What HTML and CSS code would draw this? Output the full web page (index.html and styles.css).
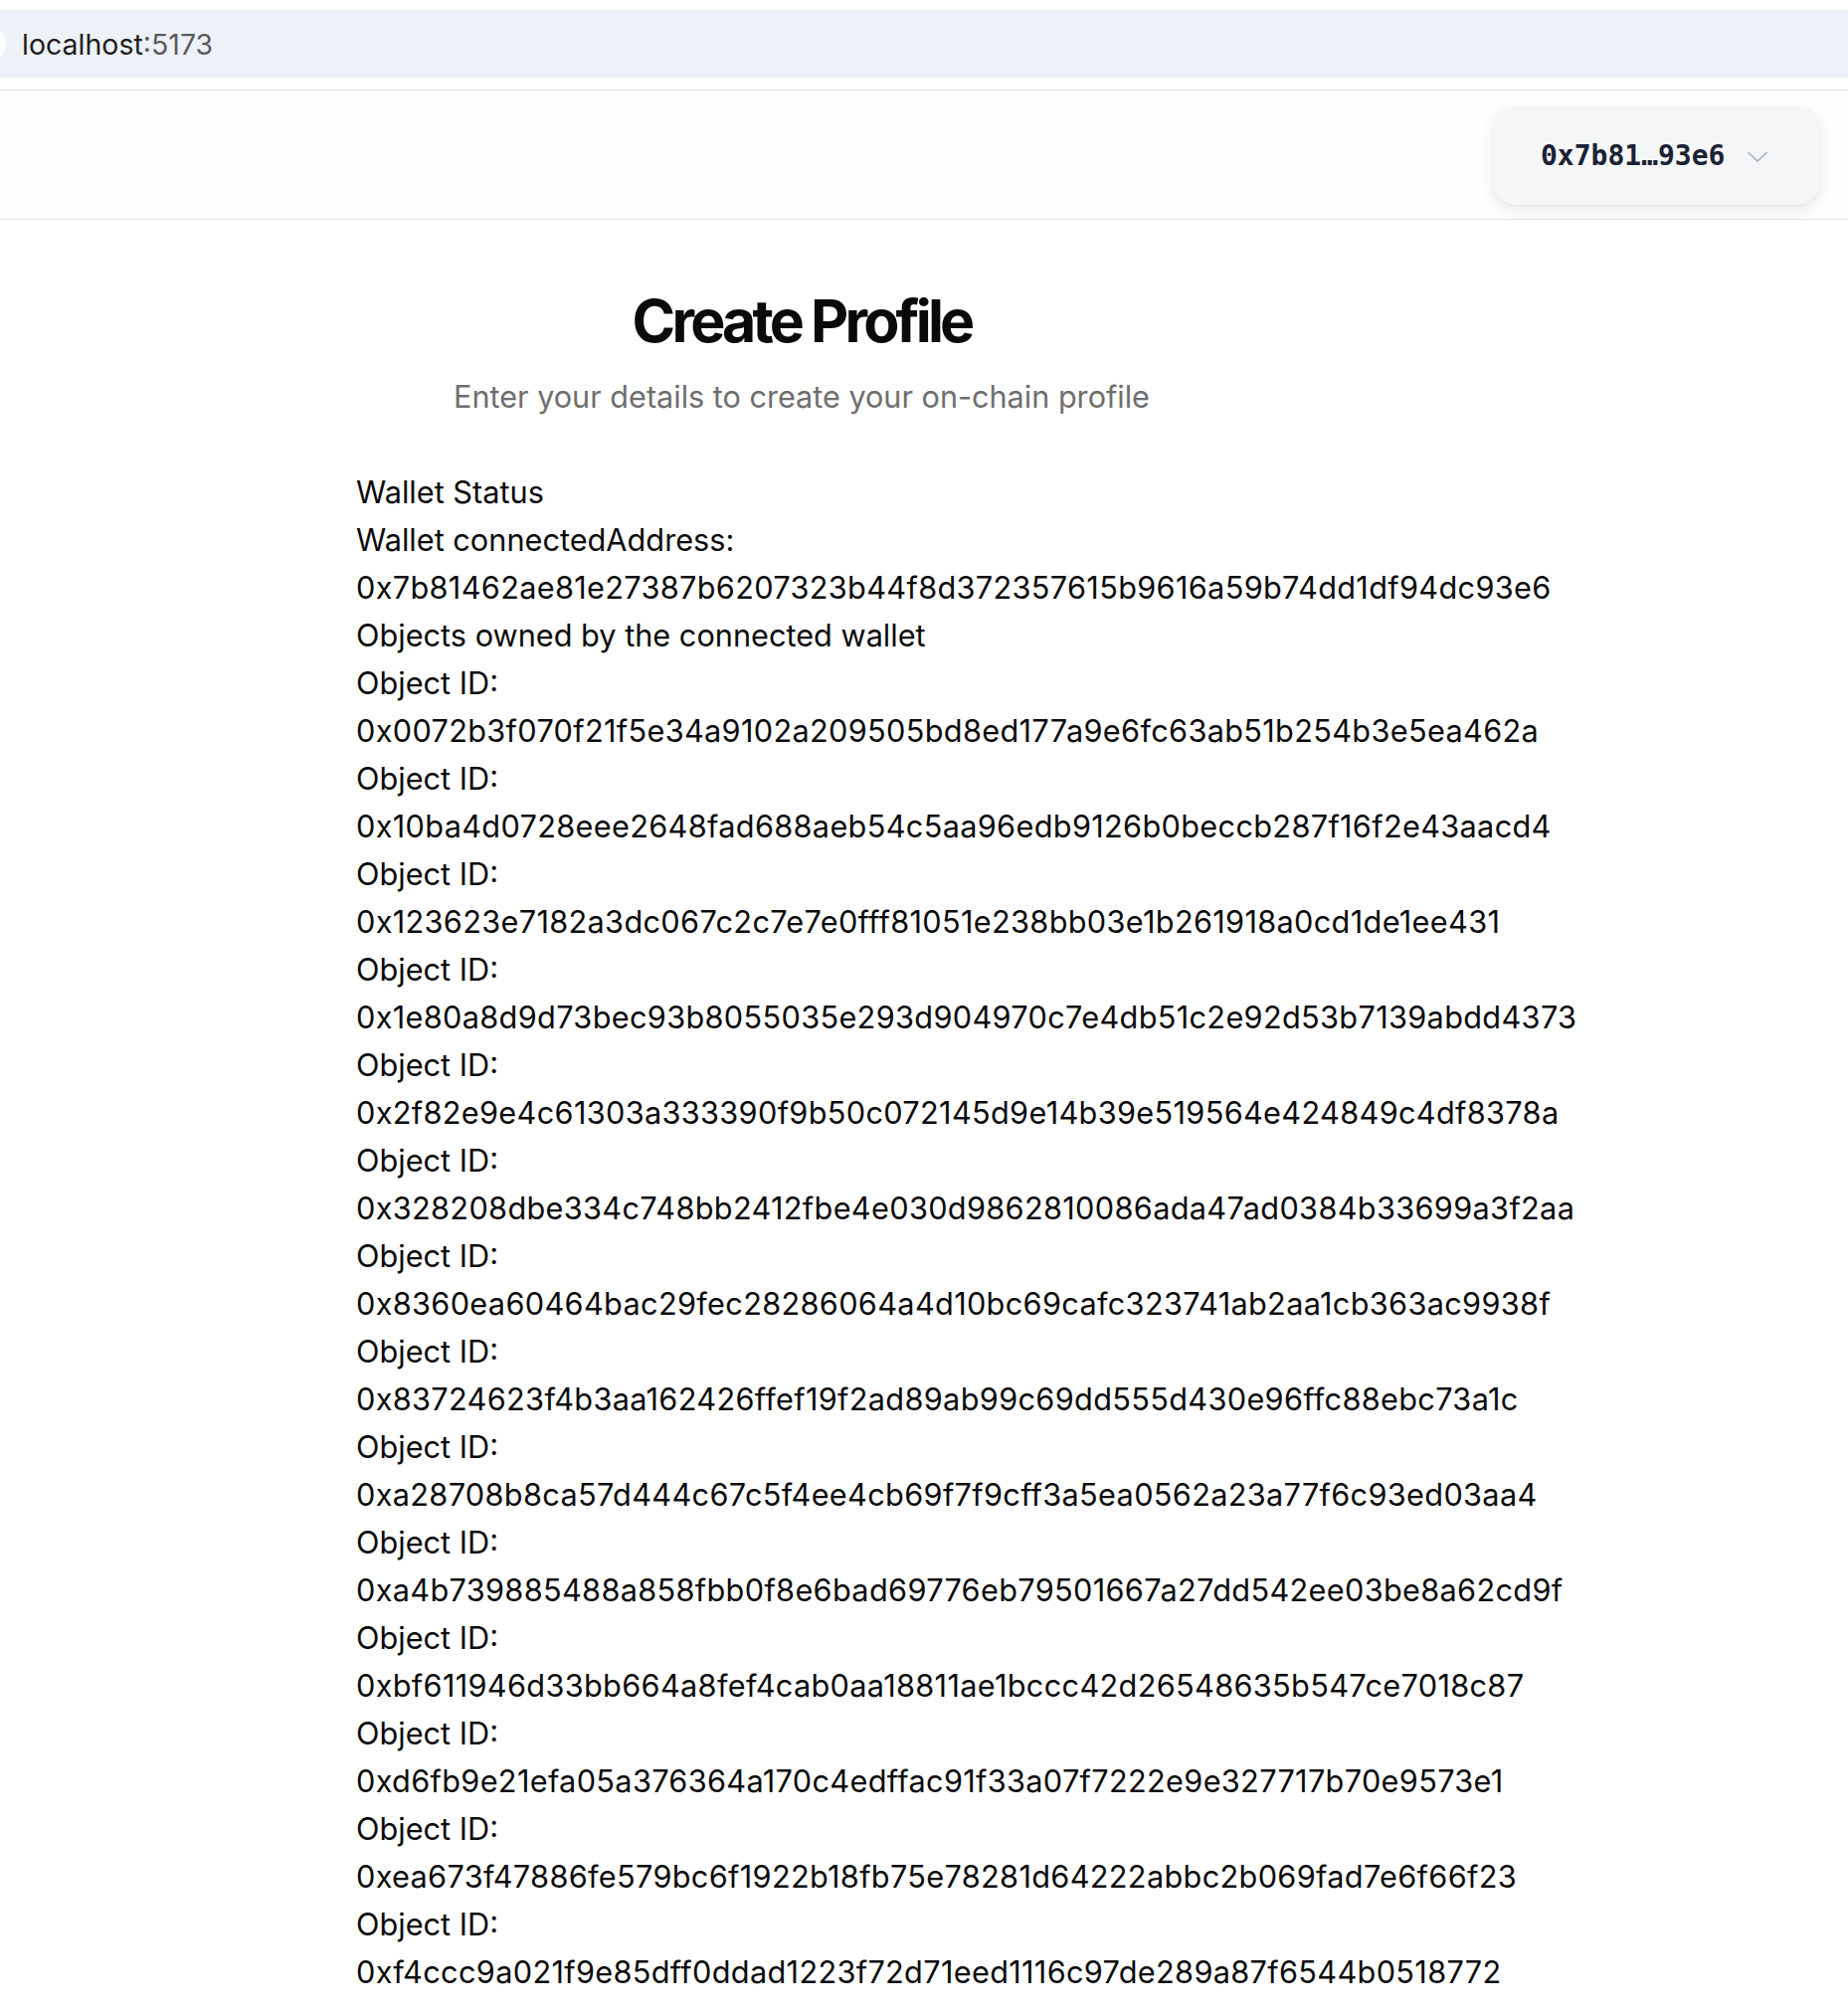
FILE: index.html
```html
<!DOCTYPE html>
<html lang="en">
<head>
<meta charset="utf-8">
<title>Create Profile</title>
<link rel="stylesheet" href="styles.css">
</head>
<body>
<div class="chrome">
  <div class="url-bar">
    <span class="url-pill"></span>
    <span class="url-host">localhost</span><span class="url-port">:5173</span>
  </div>
</div>
<header class="topbar">
  <button class="wallet-btn" type="button">
    <span class="wallet-addr">0x7b81…93e6</span>
    <svg class="chevron" width="24" height="24" viewBox="0 0 24 24" aria-hidden="true"><path d="M3 8.5 L12 17 L21 8.5" fill="none" stroke="currentColor" stroke-width="1.6" stroke-linecap="round" stroke-linejoin="round"/></svg>
  </button>
</header>
<main class="main">
  <div class="container">
    <h1 class="title">Create Profile</h1>
    <p class="subtitle">Enter your details to create your on-chain profile</p>
    <section class="status">
      <div class="line">Wallet Status</div>
      <div class="line">Wallet connectedAddress: <span class="hex">0x7b81462ae81e27387b6207323b44f8d372357615b9616a59b74dd1df94dc93e6</span></div>
      <div class="line">Objects owned by the connected wallet</div>
      <ul class="objects">
        <li>Object ID: <span class="hex">0x0072b3f070f21f5e34a9102a209505bd8ed177a9e6fc63ab51b254b3e5ea462a</span></li>
        <li>Object ID: <span class="hex">0x10ba4d0728eee2648fad688aeb54c5aa96edb9126b0beccb287f16f2e43aacd4</span></li>
        <li>Object ID: <span class="hex">0x123623e7182a3dc067c2c7e7e0fff81051e238bb03e1b261918a0cd1de1ee431</span></li>
        <li>Object ID: <span class="hex">0x1e80a8d9d73bec93b8055035e293d904970c7e4db51c2e92d53b7139abdd4373</span></li>
        <li>Object ID: <span class="hex">0x2f82e9e4c61303a333390f9b50c072145d9e14b39e519564e424849c4df8378a</span></li>
        <li>Object ID: <span class="hex">0x328208dbe334c748bb2412fbe4e030d9862810086ada47ad0384b33699a3f2aa</span></li>
        <li>Object ID: <span class="hex">0x8360ea60464bac29fec28286064a4d10bc69cafc323741ab2aa1cb363ac9938f</span></li>
        <li>Object ID: <span class="hex">0x83724623f4b3aa162426ffef19f2ad89ab99c69dd555d430e96ffc88ebc73a1c</span></li>
        <li>Object ID: <span class="hex">0xa28708b8ca57d444c67c5f4ee4cb69f7f9cff3a5ea0562a23a77f6c93ed03aa4</span></li>
        <li>Object ID: <span class="hex">0xa4b739885488a858fbb0f8e6bad69776eb79501667a27dd542ee03be8a62cd9f</span></li>
        <li>Object ID: <span class="hex">0xbf611946d33bb664a8fef4cab0aa18811ae1bccc42d26548635b547ce7018c87</span></li>
        <li>Object ID: <span class="hex">0xd6fb9e21efa05a376364a170c4edffac91f33a07f7222e9e327717b70e9573e1</span></li>
        <li>Object ID: <span class="hex">0xea673f47886fe579bc6f1922b18fb75e78281d64222abbc2b069fad7e6f66f23</span></li>
        <li>Object ID: <span class="hex">0xf4ccc9a021f9e85dff0ddad1223f72d71eed1116c97de289a87f6544b0518772</span></li>
      </ul>
    </section>
  </div>
</main>
</body>
</html>
```

FILE: styles.css
```css
* { box-sizing: border-box; }

body {
  margin: 0;
  background: #ffffff;
  color: #0b0b0b;
  font-family: Inter, "Noto Sans", "Liberation Sans", sans-serif;
  overflow: hidden;
}

.chrome {
  height: 91px;
  padding-top: 10px;
  border-bottom: 1px solid #dedede;
  background: #ffffff;
}

.url-bar {
  height: 68px;
  background: #edf1f8;
  display: flex;
  align-items: center;
  padding-left: 0;
  font-size: 28.5px;
  overflow: hidden;
}

.url-pill {
  width: 36px;
  height: 36px;
  border-radius: 50%;
  background: #ffffff;
  margin-left: -30px;
  margin-right: 16px;
  flex: none;
}

.url-host { color: #1f1f1f; }
.url-port { color: #5b5b5b; }

.topbar {
  height: 130px;
  border-bottom: 1px solid #e3e3e3;
  display: flex;
  justify-content: flex-end;
  align-items: center;
  padding-right: 28px;
  padding-top: 2px;
  background: #fefefe;
}

.wallet-btn {
  width: 329px;
  height: 99px;
  border: none;
  border-radius: 22px;
  background: #f5f6f8;
  box-shadow: 0 6px 16px rgba(0, 0, 0, 0.08), 0 1px 3px rgba(0, 0, 0, 0.04);
  display: flex;
  align-items: center;
  padding: 0 0 0 48px;
  gap: 21px;
  cursor: pointer;
}

.wallet-addr {
  font-family: "DejaVu Sans Mono", "Liberation Mono", monospace;
  font-weight: 700;
  font-size: 28px;
  color: #1a2233;
}

.chevron {
  color: #9fb0c2;
  display: block;
}

.main {
  padding-left: 358px;
  padding-top: 66px;
}

.container {
  width: 896px;
}

.title {
  margin: 0;
  text-align: center;
  font-size: 59px;
  line-height: 72px;
  font-weight: 700;
  letter-spacing: -0.065em;
  color: #0a0a0a;
}

.subtitle {
  margin: 20px 0 0;
  text-align: center;
  font-size: 30.6px;
  line-height: 40px;
  color: #6e6e6e;
}

.status {
  margin-top: 51px;
  padding-top: 1px;
  font-size: 30.7px;
  line-height: 48px;
  color: #0b0b0b;
}

.hex {
  letter-spacing: 0.32px;
}

.objects {
  list-style: none;
  margin: 0;
  padding: 0;
}
```
